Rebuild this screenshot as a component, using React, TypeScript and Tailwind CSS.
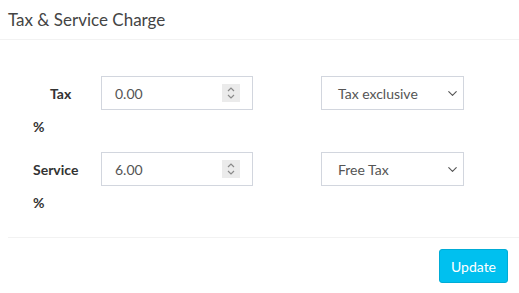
import { ChevronDown } from "lucide-react";

type Row = {
  label: string;
  indent: string;
  value: string;
  option: string;
};

const rows: Row[] = [
  { label: "Tax", indent: "pl-[17px]", value: "0.00", option: "Tax exclusive" },
  { label: "Service", indent: "pl-0", value: "6.00", option: "Free Tax" },
];

function Spinner() {
  return (
    <div className="flex h-[18px] w-[18px] items-center justify-center bg-[#ebebeb]">
      <svg width="10" height="14" viewBox="0 0 10 14" fill="none" stroke="#8a8a8a" strokeWidth="1.2">
        <path d="M2 5 L5 2 L8 5" />
        <path d="M2 9 L5 12 L8 9" />
      </svg>
    </div>
  );
}

export default function App() {
  return (
    <div className="h-[293px] w-[519px] bg-white font-['Lato',sans-serif] text-[#333]">
      <div className="flex h-[40px] items-center border-b border-[#f2f2f2] px-2 text-[17px] text-[#444]">
        Tax &amp; Service Charge
      </div>

      <div className="pl-[33px] pt-[36px]">
        {rows.map((row) => (
          <div key={row.label} className="flex h-[76px] items-start">
            <div className="w-[68px] text-[14px] font-bold">
              <div className={`flex h-[34px] items-center ${row.indent}`}>{row.label}</div>
              <div className="mt-[7px] leading-[20px]">%</div>
            </div>
            <div className="flex h-[34px] w-[152px] items-center justify-between border border-[#d2d6de] pl-[13px] pr-[12px] text-[14px] text-[#555]">
              <span>{row.value}</span>
              <Spinner />
            </div>
            <div className="ml-[68px] flex h-[34px] w-[143px] items-center justify-between border border-[#d2d6de] pl-[16px] pr-[3px] text-[14px] text-[#555]">
              <span>{row.option}</span>
              <ChevronDown size={15} strokeWidth={1.8} className="text-[#555]" />
            </div>
          </div>
        ))}
      </div>

      <div className="ml-2 mt-[9px] border-t border-[#f2f2f2]" />

      <div className="flex justify-end pr-[11px] pt-[11px]">
        <button className="h-[34px] w-[69px] rounded-[3px] border border-[#00acd6] bg-[#00c0ef] text-[14px] text-white">
          Update
        </button>
      </div>
    </div>
  );
}
